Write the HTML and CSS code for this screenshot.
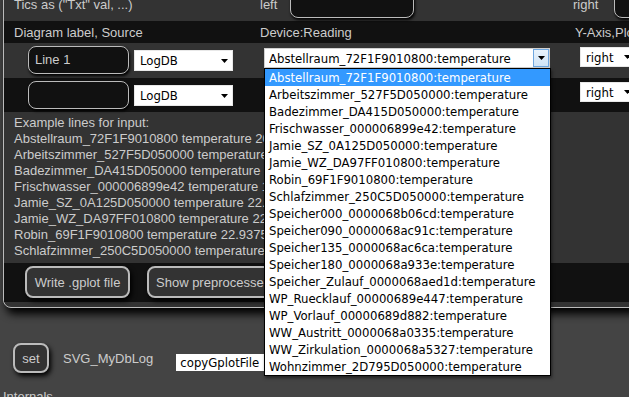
FILE: index.html
```html
<!DOCTYPE html>
<html lang="en">
<head>
  <meta charset="UTF-8">
  <title>SVG_MyDbLog</title>
  <link rel="stylesheet" href="styles.css">
</head>
<body>
  <div class="panel">
    <div class="row row-tics">
      <div class="c1">Tics as ("Txt" val, ...)</div>
      <div class="c2"><span>left</span><span class="field field-tics field-left"></span></div>
      <div class="c3"><span class="lbl-right">right</span><span class="field field-tics field-right"></span></div>
    </div>

    <div class="row row-head dark">
      <div class="c1">Diagram label, Source</div>
      <div class="c2">Device:Reading</div>
      <div class="c3">Y-Axis,Plot-Type,Style,Width</div>
    </div>

    <div class="row row-line">
      <div class="c1 c1-line">
        <span class="field field-label">Line 1</span>
        <div class="select select-src"><span class="txt">LogDB</span><svg class="arrow" viewBox="0 0 7 4"><path d="M0 0h7L3.5 4z"/></svg></div>
      </div>
      <div class="c2">
        <div class="dd">
          <div class="select select-open">
            <span class="txt">Abstellraum_72F1F9010800:temperature</span>
            <span class="dd-btn"><svg class="arrow" viewBox="0 0 7 4"><path d="M0 0h7L3.5 4z"/></svg></span>
          </div>
          <ul class="dd-list">
            <li class="sel">Abstellraum_72F1F9010800:temperature</li>
            <li>Arbeitszimmer_527F5D050000:temperature</li>
            <li>Badezimmer_DA415D050000:temperature</li>
            <li>Frischwasser_000006899e42:temperature</li>
            <li>Jamie_SZ_0A125D050000:temperature</li>
            <li>Jamie_WZ_DA97FF010800:temperature</li>
            <li>Robin_69F1F9010800:temperature</li>
            <li>Schlafzimmer_250C5D050000:temperature</li>
            <li>Speicher000_0000068b06cd:temperature</li>
            <li>Speicher090_0000068ac91c:temperature</li>
            <li>Speicher135_0000068ac6ca:temperature</li>
            <li>Speicher180_0000068a933e:temperature</li>
            <li>Speicher_Zulauf_0000068aed1d:temperature</li>
            <li>WP_Ruecklauf_00000689e447:temperature</li>
            <li>WP_Vorlauf_00000689d882:temperature</li>
            <li>WW_Austritt_0000068a0335:temperature</li>
            <li>WW_Zirkulation_0000068a5327:temperature</li>
            <li>Wohnzimmer_2D795D050000:temperature</li>
          </ul>
        </div>
      </div>
      <div class="c3">
        <div class="select select-axis"><span class="txt">right</span><svg class="arrow" viewBox="0 0 7 4"><path d="M0 0h7L3.5 4z"/></svg></div>
      </div>
    </div>

    <div class="row row-line row-line2 dark">
      <div class="c1 c1-line">
        <span class="field field-label"></span>
        <div class="select select-src"><span class="txt">LogDB</span><svg class="arrow" viewBox="0 0 7 4"><path d="M0 0h7L3.5 4z"/></svg></div>
      </div>
      <div class="c2"></div>
      <div class="c3">
        <div class="select select-axis"><span class="txt">right</span><svg class="arrow" viewBox="0 0 7 4"><path d="M0 0h7L3.5 4z"/></svg></div>
      </div>
    </div>

    <div class="row row-examples">
      <div class="examples">
        Example lines for input:<br>
        Abstellraum_72F1F9010800 temperature 20.0625<br>
        Arbeitszimmer_527F5D050000 temperature 21.125<br>
        Badezimmer_DA415D050000 temperature 21.25<br>
        Frischwasser_000006899e42 temperature 13.875<br>
        Jamie_SZ_0A125D050000 temperature 22.0625<br>
        Jamie_WZ_DA97FF010800 temperature 22.5<br>
        Robin_69F1F9010800 temperature 22.9375<br>
        Schlafzimmer_250C5D050000 temperature 19.75
      </div>
    </div>

    <div class="row row-buttons dark">
      <button class="btn btn-write">Write .gplot file</button>
      <button class="btn">Show preprocessed input</button>
    </div>
  </div>

  <div class="setrow">
    <button class="btn btn-set">set</button>
    <span class="devname">SVG_MyDbLog</span>
    <div class="select select-set"><span class="txt">copyGplotFile</span></div>
  </div>
  <div class="internals">Internals</div>
</body>
</html>
```

FILE: styles.css
```css
* {
  box-sizing: border-box;
}

html, body {
  margin: 0;
  height: 100%;
}

body {
  background: #444;
  color: #ccc;
  font-family: "Liberation Sans", Arial, sans-serif;
  font-size: 13px;
  line-height: 15px;
  overflow: hidden;
}

/**
 * Plot editor panel
 */
.panel {
  width: 760px;
  margin: -14px 0 0 3px;
  padding-bottom: 5px;
  background: #333;
  border: 1px solid #bbb;
  border-radius: 8px;
  box-shadow: 3px 6px 8px #000;
}

.row {
  display: flex;
  align-items: center;
}

.dark {
  background: #111;
}

.c1 {
  flex: none;
  width: 252px;
  padding-left: 10px;
}

.c2 {
  flex: none;
  width: 315px;
  padding-left: 4px;
  display: flex;
  align-items: center;
}

.c3 {
  flex: 1;
  padding-left: 4px;
  display: flex;
  align-items: center;
}

.row-tics { height: 34px; }
.row-head { height: 22px; }
.row-line { height: 35px; align-items: flex-start; }
.row-line2 { height: 34px; }

.lbl-right {
  margin-left: -2px;
}

/* text fields */
.field {
  display: block;
  background: #111;
  border: 1px solid #bbb;
  border-radius: 8px;
  box-shadow: 1px 2px 3px #000;
  color: #ccc;
  height: 28px;
  line-height: 26px;
  padding-left: 6px;
}

.field-left {
  width: 124px;
  margin-left: 13px;
}

.field-right {
  width: 60px;
  margin-left: 16px;
}

.c1-line {
  display: flex;
  align-items: flex-start;
  padding-left: 24px;
}

.field-label {
  width: 101px;
  margin-top: 3px;
}

/* select boxes (windows-like tahoma look) */
.select,
.dd-list {
  font-family: "DejaVu Sans", "Liberation Sans", sans-serif;
  font-stretch: condensed;
  font-size: 13px;
}

.select {
  display: flex;
  align-items: center;
  background: #fff;
  color: #000;
  border: 1px solid #e8e8e8;
  padding: 0 4px 0 5px;
}

.select .txt {
  flex: 1;
  white-space: nowrap;
  overflow: hidden;
}

.arrow {
  display: block;
  width: 7px;
  height: 4px;
}

.select-src {
  width: 99px;
  height: 21px;
  margin: 7px 0 0 5px;
}

.select-axis {
  width: 60px;
  height: 20px;
  margin: 4px 0 0 5px;
  padding-right: 8px;
}

.row-line .c2,
.row-line .c3 {
  align-items: flex-start;
}

/* open dropdown */
.dd {
  position: relative;
  margin: 5px 0 0 4px;
}

.select-open {
  width: 286px;
  height: 20px;
  padding: 0 0 0 4px;
  border-color: #d0d0d0;
}

.dd-btn {
  width: 16px;
  height: 18px;
  display: flex;
  align-items: center;
  justify-content: center;
  border: 1px solid #6fa7e0;
  background: linear-gradient(#e9f3fc, #cfe3f6);
}

.dd-list {
  position: absolute;
  top: 100%;
  left: 0;
  width: 287px;
  margin: 0;
  padding: 0;
  list-style: none;
  background: #fff;
  color: #000;
  border: 1px solid #000;
  box-shadow: 1px 2px 3px rgba(0, 0, 0, 0.5);
  z-index: 5;
}

.dd-list li {
  height: 17px;
  line-height: 17px;
  padding-left: 4px;
  white-space: nowrap;
}

.dd-list li.sel {
  background: #3399ff;
  color: #fff;
}

/* example lines */
.row-examples {
  height: 151px;
  align-items: flex-start;
}

.examples {
  padding: 3px 0 0 10px;
  line-height: 16px;
  white-space: nowrap;
}

/* buttons */
.row-buttons {
  height: 39px;
  align-items: flex-start;
  padding-left: 21px;
}

.btn {
  font-family: inherit;
  font-size: 13px;
  color: #ccc;
  background: #333;
  border: 2px solid #bbb;
  border-radius: 8px;
  box-shadow: 2px 3px 5px #000;
  height: 32px;
  margin-top: 3px;
  padding: 0 7px;
}

.btn-write {
  width: 105px;
  margin-right: 17px;
}

/* device row below panel */
.setrow {
  display: flex;
  align-items: flex-start;
  margin-top: 35px;
  padding-left: 13px;
}

.btn-set {
  width: 36px;
  height: 30px;
  margin-top: 0;
  padding: 0;
}

.devname {
  margin: 8px 0 0 14px;
}

.select-set {
  width: 100px;
  height: 17px;
  margin: 11px 0 0 23px;
  padding-left: 4px;
  border: none;
}

.internals {
  margin-top: 16px;
  padding-left: 3px;
}
```
